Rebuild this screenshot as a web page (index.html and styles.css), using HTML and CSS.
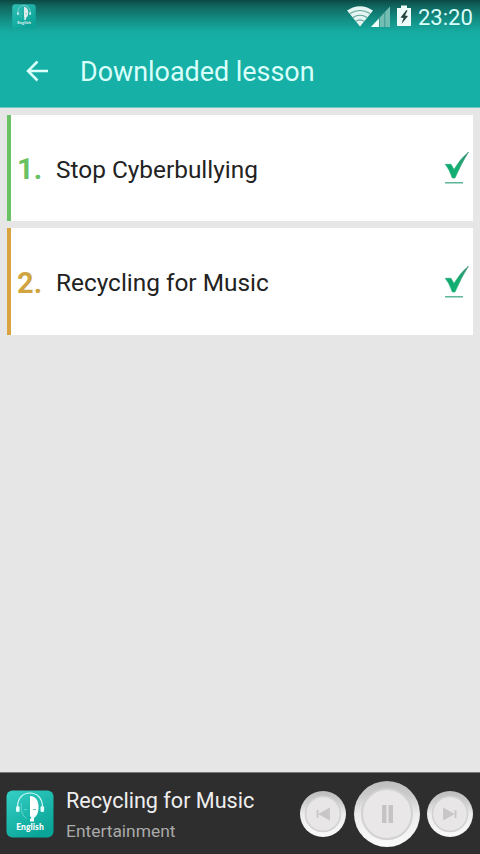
FILE: index.html
```html
<!DOCTYPE html>
<html lang="en">
<head>
<meta charset="utf-8">
<title>Downloaded lesson</title>
<link rel="stylesheet" href="styles.css">
</head>
<body>
<svg class="defs" width="0" height="0" aria-hidden="true">
  <defs>
    <linearGradient id="tile" x1="0" y1="0" x2="0.6" y2="1"><stop offset="0" stop-color="#35cfc5"/><stop offset="1" stop-color="#0aa599"/></linearGradient>
    <linearGradient id="tick" x1="0" y1="0" x2="1" y2="0"><stop offset="0" stop-color="#0fa56c"/><stop offset=".5" stop-color="#14b072"/><stop offset="1" stop-color="#3c8a72"/></linearGradient>
    <linearGradient id="rim" x1="0" y1="0" x2="0" y2="1"><stop offset="0" stop-color="#bdbdbd"/><stop offset=".25" stop-color="#cecece"/><stop offset=".5" stop-color="#ececec"/><stop offset="1" stop-color="#fafafa"/></linearGradient>
    <symbol id="logo" viewBox="0 0 48 48">
      <rect x=".5" y=".5" width="47" height="47" rx="6" fill="url(#tile)"/>
      <path d="M11.500 16C12 8 17 3 24 3s12 5 12.500 13" fill="none" stroke="#c9f8f3" stroke-width="1.200"/>
      <path d="M24 6c6 0 9 5 8.500 12-.3 6-2 8-4.500 10v3.500h-4V29l1.500-1-1.500-2z" fill="#fff"/>
      <path d="M15.500 13c-1 7 1 13 5 15.500M18 19.500h3" fill="none" stroke="#6fdcd2" stroke-width=".8"/>
      <path d="M27 19.500h3" stroke="#61bdb5" stroke-width="1"/>
      <rect x="10" y="16" width="3.600" height="6" rx="1.500" fill="#e3fffc"/>
      <rect x="34.500" y="16" width="3.600" height="6" rx="1.500" fill="#e3fffc"/>
      <text x="24" y="40" text-anchor="middle" textLength="27.500" class="logo-text">English</text>
    </symbol>
    <symbol id="check" viewBox="0 0 26 34">
      <path d="M2.300 13.300H8L11 18.500Q17 8 25.500 1Q18.500 12 12 27H9.300Q6.500 18.500 2.300 13.300Z" fill="url(#tick)" stroke="url(#tick)" stroke-width=".6"/>
      <path d="M2 31.800h18" stroke="#43ac87" stroke-width="1.300"/>
    </symbol>
  </defs>
</svg>
<div class="screen">
  <header class="top">
    <div class="status">
      <svg class="status-logo"><use href="#logo"/></svg>
      <svg class="signals" width="66" height="24" viewBox="0 0 66 24">
        <path d="M1 5.500Q14-3 27 5.500L14 21.500Z" fill="#e6f5f1"/>
        <path d="M4 8.500Q14 2.500 24 8.500M7 12.500Q14 8 21 12.500M10 16.300Q14 13.500 18 16.300" fill="none" stroke="#61a69b" stroke-width="1.100"/>
        <path d="M25 22L44 1.500V22Z" fill="#73bdb3"/>
        <path d="M25 22l8-8.500V22Z" fill="#effffc"/>
        <path d="M33.500 12v10M38.800 7v15" stroke="#3a998e" stroke-width="1"/>
        <path d="M51 3h4V.5h6V3h4v18H51Z" fill="#effdfa"/>
        <path d="M60.500 5l-6 7.500 3 .5-2 6 6.500-8-3-.5 2.500-5Z" fill="#25443f"/>
      </svg>
      <span class="time">23:20</span>
    </div>
    <div class="bar">
      <svg class="back" width="24" height="22" viewBox="0 0 24 22"><path d="M23 11H3M12.500 1.500L3 11l9.500 9.500" fill="none" stroke="#d9fffb" stroke-width="2.500"/></svg>
      <h1>Downloaded lesson</h1>
    </div>
  </header>
  <main class="list">
    <article class="card green"><span class="num">1.</span><span class="name">Stop Cyberbullying</span><svg class="check"><use href="#check"/></svg></article>
    <article class="card gold"><span class="num">2.</span><span class="name">Recycling for Music</span><svg class="check"><use href="#check"/></svg></article>
  </main>
  <footer class="player">
    <svg class="cover"><use href="#logo"/></svg>
    <div class="track"><div class="track-title">Recycling for Music</div><div class="genre">Entertainment</div></div>
    <div class="controls">
      <svg width="46" height="46" viewBox="0 0 46 46"><circle cx="23" cy="23" r="23" fill="url(#rim)"/><circle cx="23" cy="23" r="17.500" fill="#e8e6e7" stroke="#d2d2d2" stroke-width="1.500"/><path d="M17.500 19v8M29 18v10L20 23Z" stroke="#c8c6c7" stroke-width="1.800" fill="#c8c6c7"/></svg>
      <svg width="66" height="66" viewBox="0 0 66 66"><circle cx="33" cy="33" r="33" fill="url(#rim)"/><circle cx="33" cy="33" r="25" fill="#e9e7e8" stroke="#d2d2d2" stroke-width="2"/><path d="M28 24h4.500v18H28zM34.500 24H39v18h-4.500z" fill="#c5c3c4"/></svg>
      <svg width="46" height="46" viewBox="0 0 46 46"><circle cx="23" cy="23" r="23" fill="url(#rim)"/><circle cx="23" cy="23" r="17.500" fill="#e8e6e7" stroke="#d2d2d2" stroke-width="1.500"/><path d="M28.500 19v8M17 18v10L26 23Z" stroke="#c8c6c7" stroke-width="1.800" fill="#c8c6c7"/></svg>
    </div>
  </footer>
</div>
</body>
</html>
```

FILE: styles.css
```css
* { box-sizing: border-box; }
body { margin: 0; font-family: Roboto, sans-serif; }
svg { display: block; flex: none; }
.defs { position: absolute; }
.screen { width: 480px; height: 854px; display: flex; flex-direction: column; background: #e6e6e6; overflow: hidden; }
.top { height: 108px; flex: none; background: linear-gradient(#0b4943 0, #10655e 6px, #128a80 18px, #16aca2 32px, #16b0a6 40px); border-bottom: 1px solid #75c8c1; }
.status { height: 36px; display: flex; align-items: flex-start; padding: 4px 8px 0 12px; }
.status-logo { width: 24px; height: 24px; opacity: .85; }
.signals { margin: 1px 7px 0 auto; }
.time { font-size: 22px; line-height: 27px; color: #d9fff9; width: 54px; margin-left: -1px; white-space: nowrap; }
.bar { height: 71px; display: flex; align-items: center; padding-left: 25px; }
.back { margin-bottom: 2px; }
.bar h1 { margin: 0 0 0 31px; font-weight: 400; font-size: 26.9px; line-height: 36px; color: #d9fffb; white-space: nowrap; }
.list { flex: 1; padding: 7px 7px 0; display: flex; flex-direction: column; gap: 7px; }
.card { height: 106px; display: flex; align-items: center; background: #fff; border-left: 4px solid; padding-right: 4px; }
.gold { height: 107px; }
.green { border-color: #6ac164; }
.gold { border-color: #d9a340; }
.num { width: 45px; padding: 2px 0 0 6px; font-size: 29px; font-weight: 700; }
.green .num { color: #6ac164; }
.gold .num { color: #d0a440; }
.name { flex: 1; padding-top: 2px; font-size: 24.4px; color: #222; white-space: nowrap; }
.check { width: 26px; height: 34px; }
.player { height: 82px; flex: none; display: flex; align-items: center; padding: 0 7px 0 6px; background: #2e2e2e; border-top: 1px solid #777; }
.cover { width: 48px; height: 48px; }
.logo-text { font: 900 8.500px Lato, sans-serif; fill: #fff; }
.track { flex: 1; padding: 2px 0 0 12px; white-space: nowrap; }
.track-title { font-size: 21.6px; line-height: 28px; margin-top: 1px; color: #eee; }
.genre { font-size: 17.4px; line-height: 24px; margin-top: 4px; color: #aaa; }
.controls { display: flex; align-items: center; gap: 7.5px; }
```
